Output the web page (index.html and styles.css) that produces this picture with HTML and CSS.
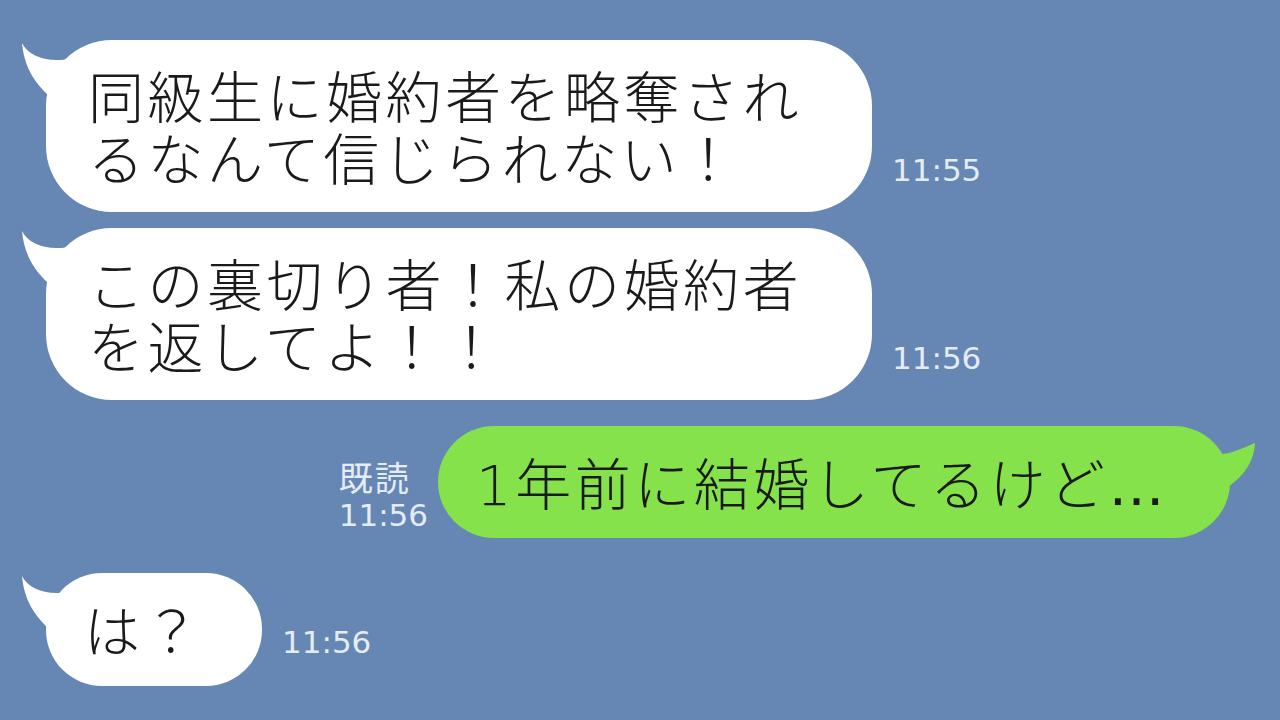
FILE: index.html
```html
<!DOCTYPE html>
<html lang="ja">
<head>
<meta charset="utf-8">
<title>LINE</title>
<link rel="stylesheet" href="styles.css">
</head>
<body>
<main class="chat">
  <div class="row row-in row-first">
    <div class="bubble bubble-in">
      <svg class="tail tail-left" viewBox="0 0 64 75" width="64" height="75"><path d="M4,3 C10,16 30,24 56,18 L36,60 C16,44 6,26 4,3 Z"/></svg>
      <p class="msg">同級生に婚約者を略奪され<br>るなんて信じられない！</p>
    </div>
    <span class="time">11:55</span>
  </div>
  <div class="row row-in row-second">
    <div class="bubble bubble-in">
      <svg class="tail tail-left" viewBox="0 0 64 75" width="64" height="75"><path d="M4,3 C10,16 30,24 56,18 L36,60 C16,44 6,26 4,3 Z"/></svg>
      <p class="msg">この裏切り者！私の婚約者<br>を返してよ！！</p>
    </div>
    <span class="time">11:56</span>
  </div>
  <div class="row row-out">
    <div class="meta">
      <span class="read">既読</span>
      <span class="time">11:56</span>
    </div>
    <div class="bubble bubble-out">
      <svg class="tail tail-right" viewBox="0 0 60 75" width="60" height="75"><path d="M57,17 C45,22 30,30 14,28 L22,66 C40,56 56,40 57,17 Z"/></svg>
      <p class="msg"><span class="latin">1</span>年前に結婚してるけど<span class="latin latin-dots">…</span></p>
    </div>
  </div>
  <div class="row row-in row-last">
    <div class="bubble bubble-in bubble-small">
      <svg class="tail tail-left" viewBox="0 0 64 75" width="64" height="75"><path d="M4,3 C10,16 30,24 56,18 L36,60 C16,44 6,26 4,3 Z"/></svg>
      <p class="msg">は？</p>
    </div>
    <span class="time time-small">11:56</span>
  </div>
</main>
</body>
</html>
```
FILE: styles.css
```css
html, body {
  margin: 0;
  padding: 0;
}
body {
  width: 1280px;
  height: 720px;
  overflow: hidden;
  background: #6687b3;
  font-family: "Noto Sans CJK JP", "Noto Sans", sans-serif;
}
.chat {
  display: flex;
  flex-direction: column;
  padding: 40px 50px 0 46px;
}
.row {
  display: flex;
  align-items: flex-end;
}
.row-in {
  gap: 20px;
}
.row-second {
  margin-top: 16px;
}
.row-out {
  justify-content: flex-end;
  gap: 10px;
  margin-top: 26px;
}
.row-last {
  margin-top: 35px;
}
.bubble {
  position: relative;
  border-radius: 66px;
  padding: 23px 70px 25px 42px;
}
.bubble-in {
  background: #ffffff;
  fill: #ffffff;
}
.bubble-small {
  border-radius: 56px;
  padding: 24px 59px 27px 38px;
}
.bubble-out {
  background: #85e24a;
  fill: #85e24a;
  border-radius: 56px;
  padding: 24px 62px 26px 38px;
}
.tail {
  position: absolute;
  top: 0;
  display: block;
}
.tail-left {
  left: -28px;
}
.tail-right {
  right: -28px;
}
.msg {
  position: relative;
  margin: 0;
  font-size: 56px;
  font-weight: 300;
  line-height: 62px;
  letter-spacing: 3.5px;
  color: #1a1a1a;
  white-space: nowrap;
}
.latin {
  font-family: "DejaVu Sans", sans-serif;
  font-weight: 200;
  line-height: 1px;
}
.latin-dots {
  font-weight: 400;
}
.time {
  font-family: "DejaVu Sans", sans-serif;
  font-size: 31px;
  line-height: 34px;
  color: #e4ecf6;
  margin-bottom: 25px;
}
.time-small {
  margin-bottom: 27px;
}
.meta {
  display: flex;
  flex-direction: column;
  align-items: flex-start;
  margin-bottom: 6px;
}
.meta .time {
  margin-bottom: 0;
}
.read {
  font-size: 34px;
  line-height: 42px;
  letter-spacing: 2px;
  color: #e4ecf6;
}
```
